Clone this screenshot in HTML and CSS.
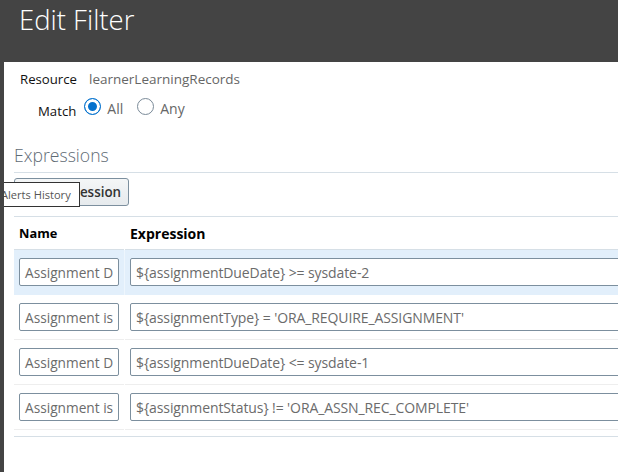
FILE: index.html
```html
<!DOCTYPE html>
<html lang="en">
<head>
<meta charset="utf-8">
<title>Edit Filter</title>
<link rel="stylesheet" href="styles.css">
</head>
<body>
<header class="banner"><h1 class="title">Edit Filter</h1></header>
<main class="content">
  <div class="field resource-row"><span class="label">Resource</span><span class="value">learnerLearningRecords</span></div>
  <div class="field match-row">
    <span class="label match-label">Match</span>
    <label class="radio"><span class="dot on"></span>All</label>
    <label class="radio"><span class="dot"></span>Any</label>
  </div>
  <h2 class="section">Expressions</h2>
  <div class="toolbar"><button class="btn">Add Expression</button></div>
  <div class="table">
    <div class="row head"><div class="c-name">Name</div><div class="c-expr">Expression</div></div>
    <div class="row sel"><div class="c-name"><div class="input">Assignment D</div></div><div class="c-expr"><div class="input">${assignmentDueDate} &gt;= sysdate-2</div></div></div>
    <div class="row"><div class="c-name"><div class="input">Assignment is</div></div><div class="c-expr"><div class="input">${assignmentType} = 'ORA_REQUIRE_ASSIGNMENT'</div></div></div>
    <div class="row"><div class="c-name"><div class="input">Assignment D</div></div><div class="c-expr"><div class="input">${assignmentDueDate} &lt;= sysdate-1</div></div></div>
    <div class="row"><div class="c-name"><div class="input">Assignment is</div></div><div class="c-expr"><div class="input">${assignmentStatus} != 'ORA_ASSN_REC_COMPLETE'</div></div></div>
  </div>
</main>
<div class="tooltip">Alerts History</div>
</body>
</html>
```
FILE: styles.css
```css
* { box-sizing: border-box; }
html, body { margin: 0; height: 100%; overflow: hidden; }
body {
  position: relative;
  width: 618px;
  height: 472px;
  background: #fff;
  border-left: 4px solid #444;
  font-family: "Open Sans", "Noto Sans", sans-serif;
  font-size: 14px;
  color: #6b6b6b;
}
.banner { height: 62px; margin-left: -4px; background: #444; padding: 0 0 0 19px; }
.title { margin: 0; font-size: 27.5px; font-weight: 300; line-height: 40px; color: #fff; }
.content { padding-left: 10px; }
.field { display: flex; align-items: center; }
.resource-row { height: 34px; padding-left: 6px; }
.label { color: #111; font-size: 13.2px; }
.value { margin-left: 12px; font-size: 13.5px; color: #666; }
.match-row { height: 26px; padding-left: 24px; }
.match-label { margin-top: 4px; margin-right: 8px; }
.radio { display: flex; align-items: center; align-self: flex-start; height: 24px; margin-right: 14px; font-size: 14px; font-weight: 500; color: #666; }
.dot {
  align-self: flex-start; width: 17px; height: 17px; margin: 2px 6px 0 0; border-radius: 50%;
  border: 1px solid #7a8a98; background: #fff;
}
.dot.on { border-color: #0572ce; box-shadow: inset 0 0 0 3px #fff; background: #0572ce; }
.section {
  margin: 21px 0 0; height: 30px; font-size: 17.6px; line-height: 24px; font-weight: 300;
  color: #5f6b75; border-bottom: 1px solid #d6dfe6;
}
.toolbar { padding-top: 5px; height: 44px; border-bottom: 1px solid #d6dfe6; }
.btn {
  display: block; width: 115px; height: 28px; padding: 0; text-align: center;
  font: 600 13.4px "Open Sans", sans-serif; color: #333;
  background: linear-gradient(#f4f6f7, #e6eaed); border: 1px solid #7c8f9e; border-radius: 3px;
}
.table { width: 800px; }
.row { display: flex; column-gap: 1px; height: 45px; }
.c-name, .c-expr { padding-top: 8px; border-bottom: 1px solid #eee; }
.c-name { width: 110px; padding-left: 5px; flex: none; }
.c-expr { flex: 1; padding-left: 5px; }
.head { height: 33px; font-weight: 700; font-size: 14px; color: #000; }
.head .c-name, .head .c-expr { padding-top: 7px; border-bottom-color: #d6dfe6; }
.head .c-name { font-size: 12.8px; }
.sel { background: #eef6fd; }
.sel .c-name, .sel .c-expr { background: #e2effb; border-bottom: 0; }
.input {
  height: 28px; line-height: 28px; padding: 0 5px; overflow: hidden; white-space: nowrap;
  background: #fff; border: 1px solid #7c8f9e; border-radius: 2px; color: #6b6b6b; font-size: 14px;
  letter-spacing: -.1px;
}
.c-name .input { width: 100px; letter-spacing: 0; font-size: 13.7px; }
.table::after { content: ""; display: block; height: 6px; border-bottom: 1px solid #d6dfe6; }
.tooltip {
  position: absolute; left: -4px; top: 182px; width: 80px; height: 25px; padding-left: 1px;
  line-height: 24px; font-size: 11.1px; color: #555; white-space: nowrap;
  background: #fff; border: 1px solid #333; border-left: 0;
}
```
